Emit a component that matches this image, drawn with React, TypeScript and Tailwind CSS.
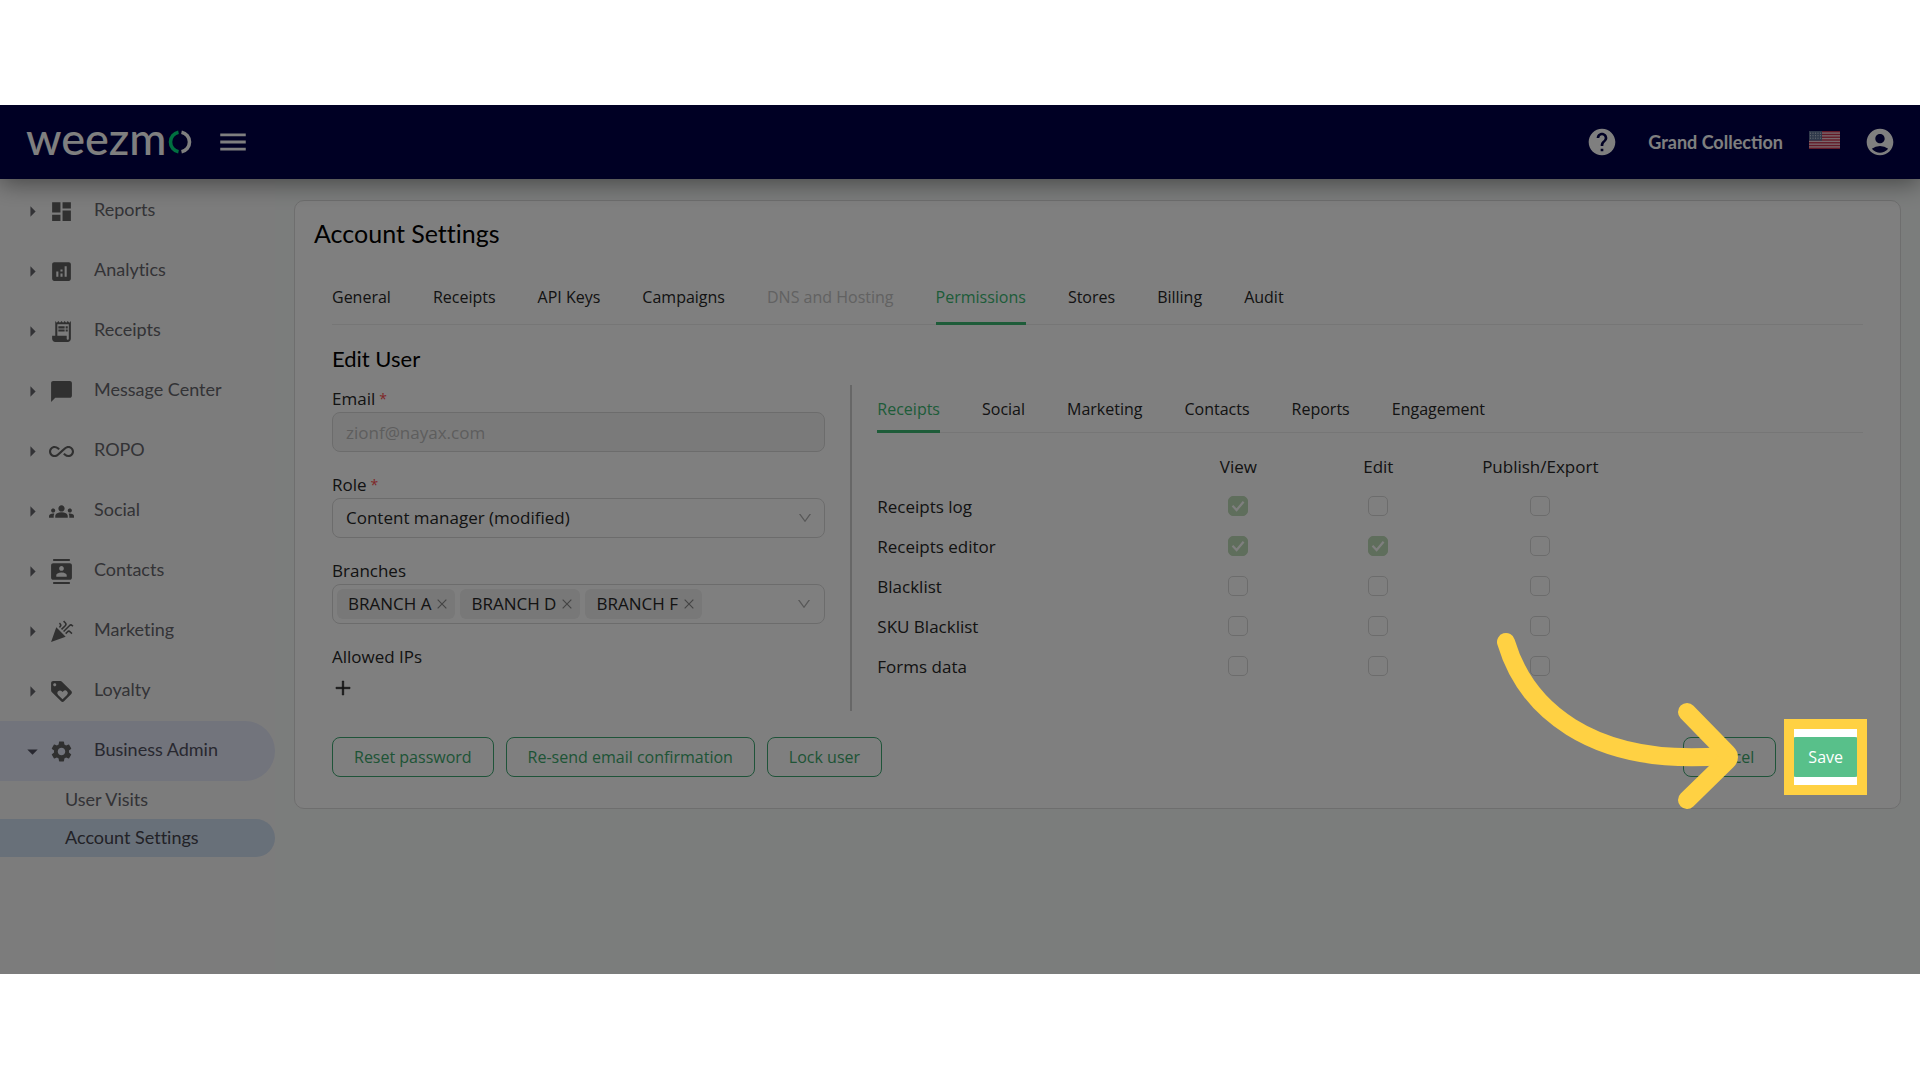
import type { ReactNode } from "react";
import type { IconType } from "react-icons";
import {
  MdAccountCircle,
  MdAllInclusive,
  MdAnalytics,
  MdArrowDropDown,
  MdArrowRight,
  MdCelebration,
  MdChatBubble,
  MdContacts,
  MdDashboard,
  MdGroups,
  MdHelp,
  MdLoyalty,
  MdMenu,
  MdReceiptLong,
  MdSettings,
} from "react-icons/md";
import { AiOutlineClose, AiOutlineDown, AiOutlinePlus } from "react-icons/ai";

const navItems: { label: string; icon: IconType; open?: boolean }[] = [
  { label: "Reports", icon: MdDashboard },
  { label: "Analytics", icon: MdAnalytics },
  { label: "Receipts", icon: MdReceiptLong },
  { label: "Message Center", icon: MdChatBubble },
  { label: "ROPO", icon: MdAllInclusive },
  { label: "Social", icon: MdGroups },
  { label: "Contacts", icon: MdContacts },
  { label: "Marketing", icon: MdCelebration },
  { label: "Loyalty", icon: MdLoyalty },
  { label: "Business Admin", icon: MdSettings, open: true },
];

const accountTabs = [
  "General",
  "Receipts",
  "API Keys",
  "Campaigns",
  "DNS and Hosting",
  "Permissions",
  "Stores",
  "Billing",
  "Audit",
];

const permissionTabs = ["Receipts", "Social", "Marketing", "Contacts", "Reports", "Engagement"];

const columns = ["View", "Edit", "Publish/Export"];

const permissions = [
  { name: "Receipts log", values: [true, false, false] },
  { name: "Receipts editor", values: [true, true, false] },
  { name: "Blacklist", values: [false, false, false] },
  { name: "SKU Blacklist", values: [false, false, false] },
  { name: "Forms data", values: [false, false, false] },
];

function Logo() {
  return (
    <div className="flex items-center text-white" aria-label="weezmo">
      <span className="-mt-2 font-['Lato',sans-serif] text-[45px] leading-[44px] font-medium">weezm</span>
      <svg className="ml-0.5 size-6" viewBox="0 0 24 24" fill="none" strokeWidth="3.6">
        <path d="M10.5 2.2A10 10 0 0 0 10.5 21.8" stroke="#00e080" />
        <path d="M13.5 2.2A10 10 0 0 1 13.5 21.8" stroke="currentColor" />
      </svg>
    </div>
  );
}

function Flag() {
  return (
    <svg className="h-[18px] w-[31px]" viewBox="0 0 31 18" role="img" aria-label="English (US)">
      <rect width="31" height="18" fill="#f0d0d8" />
      {[0, 1, 2, 3, 4, 5, 6].map((i) => (
        <rect key={i} y={(i * 36) / 13} width="31" height={18 / 13} fill="#c8324e" />
      ))}
      <rect width="13" height="9.7" fill="#5f7396" />
      {[1.5, 4, 6.5].map((y) =>
        [1.5, 4, 6.5, 9, 11.5].map((x) => (
          <circle key={`${x}-${y}`} cx={x} cy={y + 0.7} r="0.6" fill="#cfd8e6" />
        )),
      )}
    </svg>
  );
}

function Header() {
  return (
    <header className="relative z-10 flex h-[74px] items-center bg-[#000048] pr-6 pl-[26px] text-white shadow-[0_4px_24px_rgba(0,0,0,0.45)]">
      <Logo />
      <button type="button" aria-label="Toggle menu" className="ml-6">
        <MdMenu className="size-[34px]" />
      </button>
      <div className="ml-auto flex items-center">
        <button type="button" aria-label="Help">
          <MdHelp className="size-8" />
        </button>
        <span className="ml-[30px] font-['Lato',sans-serif] text-[18px] leading-6 font-bold">Grand Collection</span>
        <button type="button" aria-label="Language" className="mr-6 mb-1 ml-[26px]">
          <Flag />
        </button>
        <button type="button" aria-label="Account">
          <MdAccountCircle className="size-8" />
        </button>
      </div>
    </header>
  );
}

function Sidebar() {
  return (
    <nav className="w-[275px] shrink-0 bg-[#f9f9f9] pt-0.5 font-['Lato',sans-serif] text-[18px] leading-6 text-[#66666c] [font-variant-ligatures:none]">
      <ul>
        {navItems.map(({ label, icon: Icon, open }) => (
          <li key={label}>
            <button
              type="button"
              aria-expanded={!!open}
              className={
                open
                  ? "flex h-[60px] w-full items-center rounded-r-full bg-[#e4e8f8] pl-5 text-left text-[#505060]"
                  : "flex h-[60px] w-full items-center pl-5 text-left"
              }
            >
              {open ? <MdArrowDropDown className="size-[25px]" /> : <MdArrowRight className="size-[25px]" />}
              <Icon className="ml-1 size-[25px] text-[#606060]" />
              <span className="mb-1 ml-5">{label}</span>
            </button>
          </li>
        ))}
      </ul>
      <ul>
        <li>
          <a href="#user-visits" className="flex h-[38px] items-center pb-0.5 pl-[65px]">
            User Visits
          </a>
        </li>
        <li>
          <a
            href="#account-settings"
            className="flex h-[38px] items-center rounded-r-full bg-[#d1e0f2] pb-0.5 pl-[65px] text-[#44444e]"
          >
            Account Settings
          </a>
        </li>
      </ul>
    </nav>
  );
}

function Tabs({ items, active, disabled, tall }: { items: string[]; active: string; disabled?: string; tall?: boolean }) {
  return (
    <div
      role="tablist"
      className={
        tall
          ? "flex h-14 gap-[42px] border-b border-[#ececec] text-base"
          : "flex h-12 gap-[42px] border-b border-[#ececec] text-base"
      }
    >
      {items.map((item) => (
        <button
          key={item}
          type="button"
          role="tab"
          aria-selected={item === active}
          disabled={item === disabled}
          className={
            item === active
              ? "-mb-px border-b-3 border-[#3cb873] pt-0.5 text-[#3cb873]"
              : item === disabled
                ? "text-[#c4c4c4]"
                : "text-[#262626]"
          }
        >
          {item}
        </button>
      ))}
    </div>
  );
}

function Label({ htmlFor, required, children }: { htmlFor: string; required?: boolean; children: ReactNode }) {
  return (
    <label htmlFor={htmlFor} className="flex h-[27px] items-center gap-1">
      {children}
      {required && <span className="text-sm text-[#ff4d4f]">*</span>}
    </label>
  );
}

function UserForm() {
  return (
    <form className="flex min-w-0 flex-col gap-[19px] border-r-2 border-[#cfcfcf] pr-[25px] pb-[5px]">
      <div>
        <Label htmlFor="email" required>
          Email
        </Label>
        <input
          id="email"
          type="email"
          disabled
          defaultValue="zionf@nayax.com"
          className="h-10 w-full rounded-lg border border-[#d9d9d9] bg-[#f5f5f5] px-[13px] text-[#bcbcbc]"
        />
      </div>
      <div>
        <Label htmlFor="role" required>
          Role
        </Label>
        <div className="relative">
          <select
            id="role"
            className="h-10 w-full appearance-none rounded-lg border border-[#d9d9d9] bg-white px-[13px]"
          >
            <option>Content manager (modified)</option>
          </select>
          <AiOutlineDown className="pointer-events-none absolute top-3 right-3 size-4 text-[#b0b0b0]" />
        </div>
      </div>
      <div>
        <Label htmlFor="branches">Branches</Label>
        <div className="flex h-10 items-center gap-[5px] rounded-lg border border-[#d9d9d9] bg-white pr-3 pl-1">
          {["BRANCH A", "BRANCH D", "BRANCH F"].map((b) => (
            <span key={b} className="flex h-[30px] items-center gap-1 rounded-md bg-[#f0f0f0] pr-1.5 pl-[11px]">
              {b}
              <button type="button" aria-label={`Remove ${b}`}>
                <AiOutlineClose className="size-3.5 text-[#888888]" />
              </button>
            </span>
          ))}
          <input id="branches" type="text" className="min-w-0 flex-1 bg-transparent outline-none" />
          <AiOutlineDown className="size-4 text-[#b0b0b0]" />
        </div>
      </div>
      <div>
        <Label htmlFor="add-ip">Allowed IPs</Label>
        <button id="add-ip" type="button" aria-label="Add IP" className="flex h-9 w-[22px] items-center justify-center">
          <AiOutlinePlus className="size-5 stroke-[30]" />
        </button>
      </div>
    </form>
  );
}

function Checkbox({ label, checked }: { label: string; checked: boolean }) {
  return (
    <span className="relative inline-flex size-5 align-middle">
      <input
        type="checkbox"
        aria-label={label}
        disabled
        defaultChecked={checked}
        className="size-5 appearance-none rounded-[5px] border border-[#d9d9d9] bg-white checked:border-[#bfdcb8] checked:bg-[#bfdcb8]"
      />
      {checked && (
        <svg className="pointer-events-none absolute inset-0 size-5" viewBox="0 0 20 20" fill="none" stroke="#ffffff" strokeWidth="2.2">
          <path d="M4.5 9.8 8.6 14 15.6 5.8" />
        </svg>
      )}
    </span>
  );
}

function PermissionTable() {
  return (
    <table className="mt-3.5 w-[761px] max-w-full table-fixed">
      <colgroup>
        <col className="w-[285px]" />
        <col className="w-[152px]" />
        <col className="w-[128px]" />
        <col className="w-[196px]" />
      </colgroup>
      <thead>
        <tr className="h-10">
          <td />
          {columns.map((c) => (
            <th key={c} scope="col" className="text-center font-normal">
              {c}
            </th>
          ))}
        </tr>
      </thead>
      <tbody>
        {permissions.map((row) => (
          <tr key={row.name} className="h-10">
            <th scope="row" className="text-left font-normal">
              {row.name}
            </th>
            {row.values.map((v, i) => (
              <td key={columns[i]} className="pb-[5px] text-center">
                <Checkbox label={`${row.name}: ${columns[i]}`} checked={v} />
              </td>
            ))}
          </tr>
        ))}
      </tbody>
    </table>
  );
}

function OutlineButton({ children }: { children: ReactNode }) {
  return (
    <button type="button" className="h-10 rounded-lg border border-[#3fa873] bg-white px-[21px] text-base text-[#3ca86c]">
      {children}
    </button>
  );
}

function Arrow() {
  return (
    <svg
      className="pointer-events-none absolute -top-[113px] -left-[297px] z-30 h-[196px] w-[256px]"
      viewBox="0 0 256 196"
      fill="none"
      stroke="#ffd143"
      strokeWidth="18"
      strokeLinecap="round"
      strokeLinejoin="round"
    >
      <path d="M15 18C34 82 97 143 232 132" />
      <path d="M196 88 236 129Q240 133 236 137L196 176" />
    </svg>
  );
}

function SaveButton() {
  return (
    <div className="relative">
      <button type="button" className="h-10 rounded-lg bg-[#58c08a] px-5 text-base text-white">
        Save
      </button>
      <div className="pointer-events-none absolute -inset-x-1 -inset-y-[18px] z-20 border-10 border-[#ffd143] shadow-[0_0_0_3000px_rgba(0,0,0,0.5)]" />
      <Arrow />
    </div>
  );
}

export default function App() {
  return (
    <div className="flex min-h-screen flex-col bg-white pt-[105px] pb-[106px]">
      <div className="isolate flex flex-1 flex-col overflow-hidden bg-[#f7faf9]">
        <Header />
        <div className="flex flex-1">
          <Sidebar />
          <main className="min-w-0 flex-1 pt-[21px] pr-[19px] pl-[19px] font-['Open_Sans',sans-serif] text-[17px] leading-6 text-[#262626]">
            <section className="rounded-[10px] border border-[#dcdcdc] bg-white pt-3.5 pb-[31px]">
              <h1 className="h-9 px-[19px] font-['Lato',sans-serif] text-[25px] leading-9 text-black [font-variant-ligatures:none]">
                Account Settings
              </h1>
              <div className="mt-[18px] px-[37px]">
                <Tabs items={accountTabs} active="Permissions" disabled="DNS and Hosting" tall />
                <h2 className="mt-5 h-7 font-['Lato',sans-serif] text-[22px] leading-7 text-black">Edit User</h2>
                <div className="mt-3 grid grid-cols-[52fr_101fr]">
                  <UserForm />
                  <div className="min-w-0 pl-[25px]">
                    <Tabs items={permissionTabs} active="Receipts" />
                    <PermissionTable />
                  </div>
                </div>
                <div className="mt-[26px] flex gap-3">
                  <OutlineButton>Reset password</OutlineButton>
                  <OutlineButton>Re-send email confirmation</OutlineButton>
                  <OutlineButton>Lock user</OutlineButton>
                  <div className="ml-auto flex gap-3">
                    <OutlineButton>Cancel</OutlineButton>
                    <SaveButton />
                  </div>
                </div>
              </div>
            </section>
          </main>
        </div>
      </div>
    </div>
  );
}
